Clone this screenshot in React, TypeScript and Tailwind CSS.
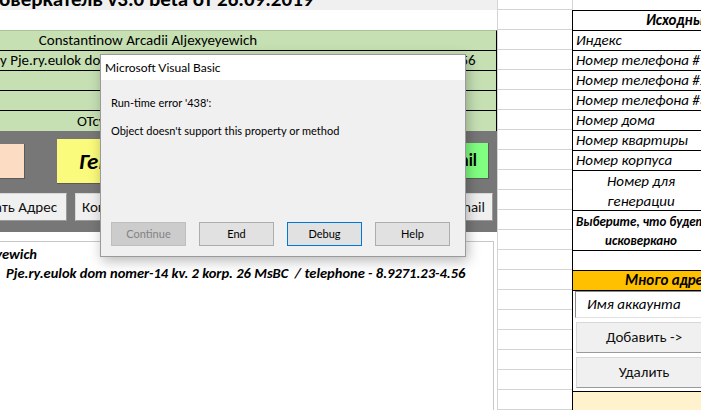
import React from "react";

const xl = "font-['Carlito','Lato','Noto_Sans',sans-serif]";
const ui = "font-['Lato','Noto_Sans',sans-serif]";

const leftRows = [
  { text: "Constantinow Arcadii Aljexyeyewich", align: "center" },
  { text: "y  Pje.ry.eulok dom nomer-14 kv. 2 korp. 26 MsBC  / telephone - 8.9271.23-4.56", align: "left" },
  { text: "", align: "left" },
  { text: "", align: "left" },
  { text: "ОТсутствует отчество", align: "start77" },
];

const labels = [
  "Индекс",
  "Номер телефона #1",
  "Номер телефона #2",
  "Номер телефона #3",
  "Номер дома",
  "Номер квартиры",
  "Номер корпуса",
];

function GridColumn() {
  return (
    <div className="w-[75px] shrink-0 border-l border-[#d4d4d4] flex flex-col">
      <div className="h-[10px] shrink-0 border-b border-[#d4d4d4]" />
      {Array.from({ length: 20 }).map((_, i) => (
        <div key={i} className="h-[20px] shrink-0 border-b border-[#d4d4d4]" />
      ))}
    </div>
  );
}

function XlButton({ children, className = "" }: { children: React.ReactNode; className?: string }) {
  return (
    <div
      className={
        "flex items-center justify-center whitespace-nowrap bg-[#f0f0f0] border border-[#d8d8d8] border-r-[#9a9a9a] border-b-[#9a9a9a] text-[15px] text-[#111] " +
        className
      }
    >
      {children}
    </div>
  );
}

function LeftColumn() {
  return (
    <div className={"w-[497px] shrink-0 flex flex-col " + xl}>
      <div className="h-[10px] shrink-0 bg-[#f0f0f0] overflow-hidden">
        <div className="mt-[-14px] ml-[-1px] text-[21px] font-bold leading-[26px] whitespace-nowrap text-black">
          оверкатель v3.0 beta от 26.09.2019
        </div>
      </div>
      <div className="h-[20px] shrink-0" />
      <div className="shrink-0 bg-[#c6e0b4] border-r border-black border-t border-t-[#a9c69a]">
        {leftRows.map((r, i) => (
          <div
            key={i}
            className={
              "h-[20px] flex items-center whitespace-nowrap overflow-hidden text-[15px] text-black " +
              (i < 4 ? "border-b border-black " : "") +
              (r.align === "center"
                ? "justify-center pr-[200px] text-[15.5px]"
                : r.align === "start77"
                  ? "pl-[77px]"
                  : "pl-0")
            }
          >
            {r.text}
          </div>
        ))}
      </div>
      <div className="h-[101px] shrink-0 bg-[#777777] flex flex-col">
        <div className="flex items-start mt-[8px] h-[45px]">
          <div className="w-[25px] h-[35px] mt-[5px] bg-[#fcdcc2] border-r border-b border-[#5a5a5a]" />
          <div className="ml-[32px] w-[260px] h-[45px] bg-[#fafa7c] border-r border-b border-[#5a5a5a] flex items-center pl-[22px] text-[23px] font-bold italic text-black">
            Генерировать
          </div>
          <div className="ml-auto mr-[8px] w-[64px] h-[36px] mt-[4px] bg-[#80ff80] border-r border-b border-[#5a5a5a] flex items-center justify-end pr-[11px] text-[17px] font-bold text-black whitespace-nowrap">
            Email
          </div>
        </div>
        <div className="flex items-start mt-[9px]">
          <div className="w-[67px] flex justify-end">
            <XlButton className="shrink-0 h-[28px] px-[9px]">Скопировать Адрес</XlButton>
          </div>
          <XlButton className="ml-[8px] h-[28px] w-[160px] justify-start pl-[6px]">Копировать ФИО</XlButton>
          <XlButton className="ml-auto mr-[4px] h-[28px] px-[7px]">Копировать Email</XlButton>
        </div>
      </div>
      <div className="h-[9px] shrink-0" />
      <div className="h-[190px] shrink-0 mr-[3px] border-t border-r border-[#c8c8c8] bg-white pt-[3px] text-[14.5px] font-bold italic text-black leading-[19px]">
        <div className="w-[37px] flex justify-end whitespace-nowrap">
          <span className="shrink-0">Constantinow Arcadii Aljexyeyewich</span>
        </div>
        <div className="pl-[6px] whitespace-nowrap">
          Pje.ry.eulok dom nomer-14 kv. 2 korp. 26 MsBC&nbsp; / telephone - 8.9271.23-4.56
        </div>
      </div>
    </div>
  );
}

function RightColumn() {
  return (
    <div className={"flex-1 flex flex-col " + xl}>
      <div className="h-[10px] shrink-0 border-l border-[#d4d4d4]" />
      <div className="shrink-0 border-l border-t border-black flex flex-col text-[15px] text-black">
        <div className="h-[20px] border-b border-black flex items-center pl-[73px] font-bold italic whitespace-nowrap">
          Исходные данные
        </div>
        {labels.map((l) => (
          <div key={l} className="h-[20px] border-b border-black flex items-center pl-[3px] italic whitespace-nowrap">
            {l}
          </div>
        ))}
        <div className="h-[40px] border-b border-black w-[136px] flex flex-col items-center justify-center italic leading-[20px]">
          <span>Номер для</span>
          <span>генерации</span>
        </div>
        <div className="h-[40px] border-b border-black flex flex-col justify-center text-[13px] font-bold italic leading-[19px]">
          <span className="pl-[3px] whitespace-nowrap">Выберите, что будет исковеркано:</span>
          <span className="w-[136px] text-center">исковеркано</span>
        </div>
        <div className="h-[20px] border-b border-black" />
        <div className="h-[20px] bg-[#ffc000] border-b border-black flex items-center pl-[52px] font-bold italic whitespace-nowrap">
          Много адресов
        </div>
        <div className="h-[100px] flex flex-col pl-[2px]">
          <div className="h-[27px] bg-white border border-[#8a8a8a] border-r-[#e0e0e0] border-b-[#e0e0e0] flex items-center pl-[11px] italic whitespace-nowrap">
            Имя аккаунта
          </div>
          <XlButton className="mt-[4px] h-[31px] w-[136px] ml-[1px]">Добавить -&gt;</XlButton>
          <XlButton className="mt-[4px] h-[31px] w-[136px] ml-[1px]">Удалить</XlButton>
        </div>
        <div className="h-[20px] bg-[#fff2cc] border-t border-black" />
      </div>
    </div>
  );
}

function DlgButton({ children, disabled, focused }: { children: React.ReactNode; disabled?: boolean; focused?: boolean }) {
  return (
    <div
      className={
        "w-[75px] h-[24px] flex items-center justify-center text-[11px] border " +
        (focused
          ? "bg-[#e1e1e1] border-[#0078d7] text-black"
          : disabled
            ? "bg-[#cccccc] border-[#bfbfbf] text-[#838383]"
            : "bg-[#e1e1e1] border-[#adadad] text-black")
      }
    >
      {children}
    </div>
  );
}

function ErrorDialog() {
  return (
    <div
      className={
        "absolute left-[100px] top-[54px] w-[366px] h-[203px] flex flex-col bg-[#f0f0f0] border border-[#9a9a9a] shadow-[2px_4px_12px_rgba(0,0,0,0.28)] " +
        ui
      }
    >
      <div className="h-[25px] shrink-0 bg-white flex items-center pl-[4px] text-[12px] text-black">Microsoft Visual Basic</div>
      <div className="flex-1 flex flex-col pl-[10px] pt-[15px] text-[11px] text-black">
        <div>Run-time error '438':</div>
        <div className="mt-[11px]">Object doesn't support this property or method</div>
        <div className="mt-auto mb-[10px] flex gap-[13px]">
          <DlgButton disabled>Continue</DlgButton>
          <DlgButton>End</DlgButton>
          <DlgButton focused>Debug</DlgButton>
          <DlgButton>Help</DlgButton>
        </div>
      </div>
    </div>
  );
}

export default function App() {
  return (
    <div className="relative w-[701px] h-[410px] overflow-hidden bg-white flex">
      <LeftColumn />
      <GridColumn />
      <RightColumn />
      <ErrorDialog />
    </div>
  );
}
